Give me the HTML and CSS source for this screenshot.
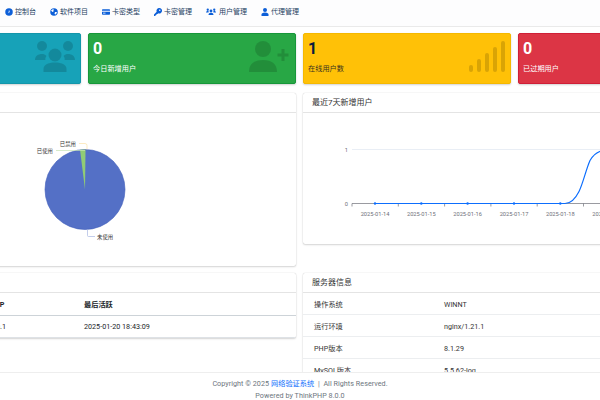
FILE: index.html
```html
<!DOCTYPE html>
<html lang="zh">
<head>
<meta charset="utf-8">
<title>控制台</title>
<link rel="stylesheet" href="styles.css">
</head>
<body>
<nav class="nav">
  <a class="nav-item"><svg class="nav-icon" viewBox="0 0 16 16"><circle cx="8" cy="8" r="7.5"/><path class="cut" d="M8 3.5l1.500 4.500-3 2.500 1-3.500z"/></svg>控制台</a>
  <a class="nav-item"><svg class="nav-icon" viewBox="0 0 16 16"><circle cx="8" cy="8" r="7.5"/><path class="cut" d="M7 1.500L2 5l3 3 2-1zM10 8l4 0-2 5-3-1z"/></svg>软件项目</a>
  <a class="nav-item"><svg class="nav-icon" viewBox="0 0 16 16"><path d="M0 4a1.500 1.500 0 0 1 1.500-1.500h13A1.500 1.500 0 0 1 16 4v1.500H0zM0 7.500h16V12a1.500 1.500 0 0 1-1.500 1.500h-13A1.500 1.500 0 0 1 0 12z"/><rect class="cut" x="2" y="9.500" width="5" height="1.500"/></svg>卡密类型</a>
  <a class="nav-item"><svg class="nav-icon" viewBox="0 0 16 16"><path d="M10.500 0a5.500 5.500 0 1 1-2 10.600L7 12H5v2H3v2H0v-3l5.400-5.400A5.500 5.500 0 0 1 10.500 0z"/><circle class="cut" cx="11.500" cy="4.500" r="1.500"/></svg>卡密管理</a>
  <a class="nav-item nav-item-wide"><svg class="nav-icon" viewBox="0 0 20 16"><circle cx="10" cy="6" r="2.800"/><path d="M5 14c0-3 2-4.500 5-4.500s5 1.500 5 4.500z"/><circle cx="3.500" cy="3.500" r="2.300"/><circle cx="16.500" cy="3.500" r="2.300"/><path d="M0 9c0-2 1.500-3 3.500-3 1 0 1.500.3 2 .8-.5 1-.5 1.500-.3 2.200z"/><path d="M20 9c0-2-1.500-3-3.500-3-1 0-1.500.3-2 .8.500 1 .5 1.500.3 2.200z"/></svg>用户管理</a>
  <a class="nav-item"><svg class="nav-icon" viewBox="0 0 16 16"><circle cx="8" cy="4" r="4"/><path d="M1 16v-3c0-2 2-4 7-4s7 2 7 4v3z"/></svg>代理管理</a>
</nav>

<main class="page">
  <section class="stats">
    <div class="stat stat-teal">
      <div class="stat-num">3</div>
      <div class="stat-label">用户总数</div>
      <svg class="stat-icon stat-icon-users" viewBox="0 0 40 31"><circle cx="20" cy="14" r="6.500"/><path d="M8.500 31v-3c0-4 4-6.500 11.500-6.500S31.500 24 31.500 28v3z"/><circle cx="7" cy="5" r="5"/><circle cx="33" cy="5" r="5"/><path d="M0 19c0-4 3-6 7-6 2 0 3 .5 4.500 2-1 1.500-1.500 2.500-1 4zM40 19c0-4-3-6-7-6-2 0-3 .5-4.500 2 1 1.500 1.500 2.500 1 4z"/></svg>
    </div>
    <div class="stat stat-green">
      <div class="stat-num">0</div>
      <div class="stat-label">今日新增用户</div>
      <svg class="stat-icon stat-icon-add" viewBox="0 0 40 31"><circle cx="14" cy="8" r="8"/><path d="M0 31c0-8 5-12 14-12s14 4 14 12z"/><path d="M34 8v12M28.500 14h11" class="plus"/></svg>
    </div>
    <div class="stat stat-yellow">
      <div class="stat-num">1</div>
      <div class="stat-label">在线用户数</div>
      <svg class="stat-icon stat-icon-bars" viewBox="0 0 36 31"><rect x="0" y="24" width="4" height="7" rx="2"/><rect x="8" y="18" width="4" height="13" rx="2"/><rect x="16" y="12" width="4" height="19" rx="2"/><rect x="24" y="6" width="4" height="25" rx="2"/><rect x="32" y="0" width="4" height="31" rx="2"/></svg>
    </div>
    <div class="stat stat-red">
      <div class="stat-num">0</div>
      <div class="stat-label">已过期用户</div>
    </div>
  </section>

  <section class="panels">
    <article class="panel">
      <h2 class="panel-title">卡密状态分布</h2>
      <div class="panel-body">
        <svg class="chart chart-pie" viewBox="0 0 423 152">
          <circle class="pie-main" cx="212" cy="76" r="40"/>
          <path class="pie-slice" d="M212 76L207 36.300A40 40 0 0 1 212.500 36z"/>
          <path class="lead-green" d="M183 37H212"/>
          <path class="lead-yellow" d="M206 30h6a2 2 0 0 1 2 2v4"/>
          <path class="lead-blue" d="M214.500 116v6a1 1 0 0 0 1 1H222"/>
          <text class="pie-text" x="180" y="39.500" text-anchor="end">已使用</text>
          <text class="pie-text" x="203" y="32" text-anchor="end">已禁用</text>
          <text class="pie-text" x="224" y="125.500">未使用</text>
        </svg>
      </div>
    </article>

    <article class="panel">
      <h2 class="panel-title">最近7天新增用户</h2>
      <div class="panel-body">
        <svg class="chart chart-line" viewBox="0 0 423 130">
          <path class="grid" d="M49 36H423"/>
          <path class="axis" d="M49 90H423M49 90v3M95.300 90v3M141.600 90v3M187.900 90v3M234.200 90v3M280.500 90v3"/>
          <text class="tick" x="45" y="38" text-anchor="end">1</text>
          <text class="tick" x="45" y="92" text-anchor="end">0</text>
          <text class="tick" x="72" y="102" text-anchor="middle">2025-01-14</text>
          <text class="tick" x="118.300" y="102" text-anchor="middle">2025-01-15</text>
          <text class="tick" x="164.600" y="102" text-anchor="middle">2025-01-16</text>
          <text class="tick" x="211" y="102" text-anchor="middle">2025-01-17</text>
          <text class="tick" x="257.300" y="102" text-anchor="middle">2025-01-18</text>
          <text class="tick" x="303.600" y="102" text-anchor="middle">2025-01-19</text>
          <path class="line" d="M72 90H262C268 90 272 86 276 78C280 70 283 56 287 47C291 40 295 38 300 37L304 36"/>
          <g class="dots">
            <circle cx="72" cy="90" r="1.200"/><circle cx="118.300" cy="90" r="1.200"/><circle cx="164.600" cy="90" r="1.200"/><circle cx="211" cy="90" r="1.200"/><circle cx="257.300" cy="90" r="1.200"/>
          </g>
        </svg>
      </div>
    </article>

    <article class="panel">
      <h2 class="panel-title">最近登录记录</h2>
      <div class="log-row log-head"><span>用户名</span><span>客户端IP</span><span>最后活跃</span></div>
      <div class="log-row"><span>admin</span><span>127.0.0.1</span><span>2025-01-20 18:43:09</span></div>
    </article>

    <article class="panel">
      <h2 class="panel-title">服务器信息</h2>
      <div class="info-row"><span>操作系统</span><span>WINNT</span></div>
      <div class="info-row"><span>运行环境</span><span>nginx/1.21.1</span></div>
      <div class="info-row"><span>PHP版本</span><span>8.1.29</span></div>
      <div class="info-row"><span>MySQL版本</span><span>5.5.62-log</span></div>
    </article>
  </section>
</main>

<footer class="footer">
  <div>Copyright © 2025 <a class="footer-link">网络验证系统</a> &nbsp;|&nbsp; All Rights Reserved.</div>
  <div>Powered by ThinkPHP 8.0.0</div>
</footer>
</body>
</html>
```
FILE: styles.css
```css
* { box-sizing: border-box; }
html, body { margin: 0; height: 100%; }
body {
  width: 600px;
  height: 400px;
  overflow: hidden;
  position: relative;
  background: #fff;
  color: #212529;
  font-family: Roboto, "Noto Sans CJK SC", sans-serif;
  font-size: 7.200px;
}

.nav {
  display: flex;
  align-items: flex-start;
  gap: 14px;
  height: 27px;
  padding: 6.500px 0 0 5px;
  background: #fdfdfe;
  border-bottom: 1px solid #eaeaea;
}
.nav-item {
  display: flex;
  align-items: center;
  gap: 2px;
  color: #24405e;
  font-size: 7px;
  line-height: 10px;
  white-space: nowrap;
}
.nav-icon { width: 8px; height: 8px; fill: #0d5fd8; flex: none; }
.nav-icon .cut { fill: #fff; }
.nav-item-wide .nav-icon { width: 10px; margin-right: 1px; }

.page {
  width: 853px;
  margin-left: -127px;
  padding-top: 6px;
}

.stats {
  display: grid;
  grid-template-columns: repeat(4, 208px);
  gap: 7px;
}
.stat {
  position: relative;
  height: 51px;
  padding: 6px 4px;
  border-radius: 2px;
  border: 1px solid transparent;
  box-shadow: 0 1px 2px rgba(0,0,0,.18);
  color: #fff;
}
.stat-num { font-size: 16px; font-weight: 700; line-height: 18px; }
.stat-label { margin-top: 5px; font-size: 7.200px; line-height: 11px; }
.stat-teal { background: #17a2b8; border-color: #1496aa; }
.stat-green { background: #28a745; border-color: #17973a; }
.stat-yellow { background: #ffc107; border-color: #f5b800; color: #0b1b3f; }
.stat-yellow .stat-label { color: #3a3320; }
.stat-red { background: #dc3545; border-color: #cf1f37; }
.stat-icon { position: absolute; fill: rgba(0,0,0,.15); }
.stat-icon-users { right: 5px; top: 7px; width: 40px; height: 31px; }
.stat-icon-add { right: 6px; top: 7px; width: 40px; height: 31px; }
.stat-icon-add .plus { fill: none; stroke: rgba(0,0,0,.15); stroke-width: 3; }
.stat-icon-bars { right: 5px; top: 7px; width: 36px; height: 31px; }

.panels {
  display: grid;
  grid-template-columns: repeat(2, 423px);
  gap: 7px;
  align-items: start;
  margin-top: 9px;
}
.panel {
  background: #fff;
  border-radius: 2px;
  box-shadow: 0 0 1px rgba(0,0,0,.25), 0 1px 2px rgba(0,0,0,.15);
  overflow: hidden;
}
.panel-title {
  margin: 0;
  height: 20px;
  padding: 0 9px;
  font-size: 8px;
  font-weight: 400;
  line-height: 20px;
  color: #333;
  border-bottom: 1px solid #e4e4e4;
}
.panel-body { display: block; }
.chart { display: block; width: 423px; }
.chart-pie { height: 153px; }
.chart-line { height: 131px; }

.pie-main { fill: #5470c6; stroke: #3c5ab8; stroke-width: .6; }
.pie-slice { fill: #91cc75; }
.lead-green { fill: none; stroke: #c5e3b5; stroke-width: .7; }
.lead-yellow { fill: none; stroke: #fbe2a9; stroke-width: .7; }
.lead-blue { fill: none; stroke: #a9b8e3; stroke-width: .7; }
.pie-text { font-size: 5.400px; fill: #333; }

.grid { stroke: #e0e6f1; stroke-width: .7; fill: none; }
.axis { stroke: #6e7079; stroke-width: .7; fill: none; }
.tick { font-size: 5.700px; fill: #6e7079; }
.line { fill: none; stroke: #0d6efd; stroke-width: 1.200; }
.dots { fill: #0d6efd; }

.log-row, .info-row {
  display: grid;
  height: 22px;
  align-items: center;
  padding: 1px 11px 0;
  border-bottom: 1px solid #dee2e6;
  font-size: 7.200px;
}
.log-row { grid-template-columns: 92px 108px 1fr; height: 22.500px; padding-right: 0; }
.log-head { font-weight: 700; border-bottom-color: #cdd3d8; }
.info-row { grid-template-columns: 130px 1fr; border-bottom-color: #eceef0; color: #333; }

.footer {
  position: absolute;
  left: 0;
  right: 0;
  bottom: 0;
  height: 28px;
  padding-top: 5px;
  background: #fff;
  border-top: 1px solid #eee;
  color: #6c757d;
  font-size: 7.200px;
  letter-spacing: .04px;
  line-height: 11.500px;
  text-align: center;
}
.footer-link { color: #0d6efd; }
```
